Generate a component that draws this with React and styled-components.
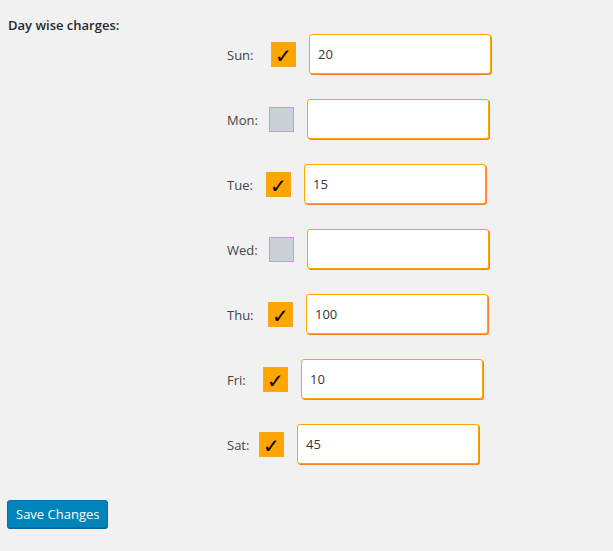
import React, { useState } from 'react';
import styled, { createGlobalStyle } from 'styled-components';

const GlobalStyle = createGlobalStyle`
  html, body {
    margin: 0;
    padding: 0;
    background: #f1f1f1;
    font-family: 'Open Sans', 'Liberation Sans', sans-serif;
    color: #23282d;
  }
`;

// labelWidth: space from the label start to the checkbox (as laid out in the form)
const days = [
  { name: 'Sun', checked: true, value: '20', labelWidth: 44 },
  { name: 'Mon', checked: false, value: '', labelWidth: 42 },
  { name: 'Tue', checked: true, value: '15', labelWidth: 39 },
  { name: 'Wed', checked: false, value: '', labelWidth: 42 },
  { name: 'Thu', checked: true, value: '100', labelWidth: 41 },
  { name: 'Fri', checked: true, value: '10', labelWidth: 36 },
  { name: 'Sat', checked: true, value: '45', labelWidth: 32 },
];

export default function App() {
  const [rows, setRows] = useState(days);

  const toggle = (i) => {
    setRows(rows.map((r, j) => (j === i ? { ...r, checked: !r.checked } : r)));
  };

  const change = (i, value) => {
    setRows(rows.map((r, j) => (j === i ? { ...r, value } : r)));
  };

  return (
    <Page>
      <GlobalStyle />
      <FormTable>
        <Heading>Day wise charges:</Heading>
        <DayList>
          {rows.map((day, i) => (
            <DayRow key={day.name}>
              <DayLabel $width={day.labelWidth}>{day.name}:</DayLabel>
              <Check $checked={day.checked} onClick={() => toggle(i)}>
                {day.checked ? '✓' : ''}
              </Check>
              <ChargeInput
                value={day.value}
                onChange={(e) => change(i, e.target.value)}
              />
            </DayRow>
          ))}
        </DayList>
      </FormTable>
      <SaveButton>Save Changes</SaveButton>
    </Page>
  );
}

const Page = styled.div`
  padding: 0 7px 22px;
`;

const FormTable = styled.div`
  display: grid;
  grid-template-columns: 220px 1fr;
`;

const Heading = styled.div`
  padding: 16px 0 0 1px;
  font-size: 13px;
  font-weight: 600;
  color: #23282d;
`;

const DayList = styled.div`
  display: flex;
  flex-direction: column;
  gap: 25px;
  padding-top: 34px;
`;

const DayRow = styled.div`
  display: flex;
  align-items: center;
  height: 40px;
`;

const DayLabel = styled.span`
  width: ${(p) => p.$width}px;
  font-size: 13px;
  color: #444;
  padding-top: 2px;
`;

const Check = styled.div`
  box-sizing: border-box;
  width: 25px;
  height: 25px;
  border: 1px solid #f5a623;
  background: ${(p) => (p.$checked ? '#ffa500' : '#cbd0d6')};
  color: #000;
  font-family: 'DejaVu Sans', sans-serif;
  font-size: 20px;
  font-weight: bold;
  line-height: 26px;
  text-align: center;
  margin-right: 13px;
  cursor: pointer;
`;

const ChargeInput = styled.input`
  box-sizing: border-box;
  width: 182px;
  height: 40px;
  border: 1px solid #ffa500;
  border-radius: 3px;
  box-shadow: 1px 1px 0 #ff7f27;
  background: #fff;
  padding: 0 8px;
  font-family: 'Open Sans', 'Liberation Sans', sans-serif;
  font-size: 13px;
  color: #32373c;
  outline: none;
`;

const SaveButton = styled.button`
  display: block;
  margin-top: 36px;
  height: 28px;
  padding: 0 8px;
  background: #0085ba;
  border: 1px solid #0073aa;
  border-radius: 3px;
  box-shadow: 0 1px 0 #006799;
  color: #fff;
  font-family: 'Open Sans', 'Liberation Sans', sans-serif;
  font-size: 13px;
  cursor: pointer;
`;
